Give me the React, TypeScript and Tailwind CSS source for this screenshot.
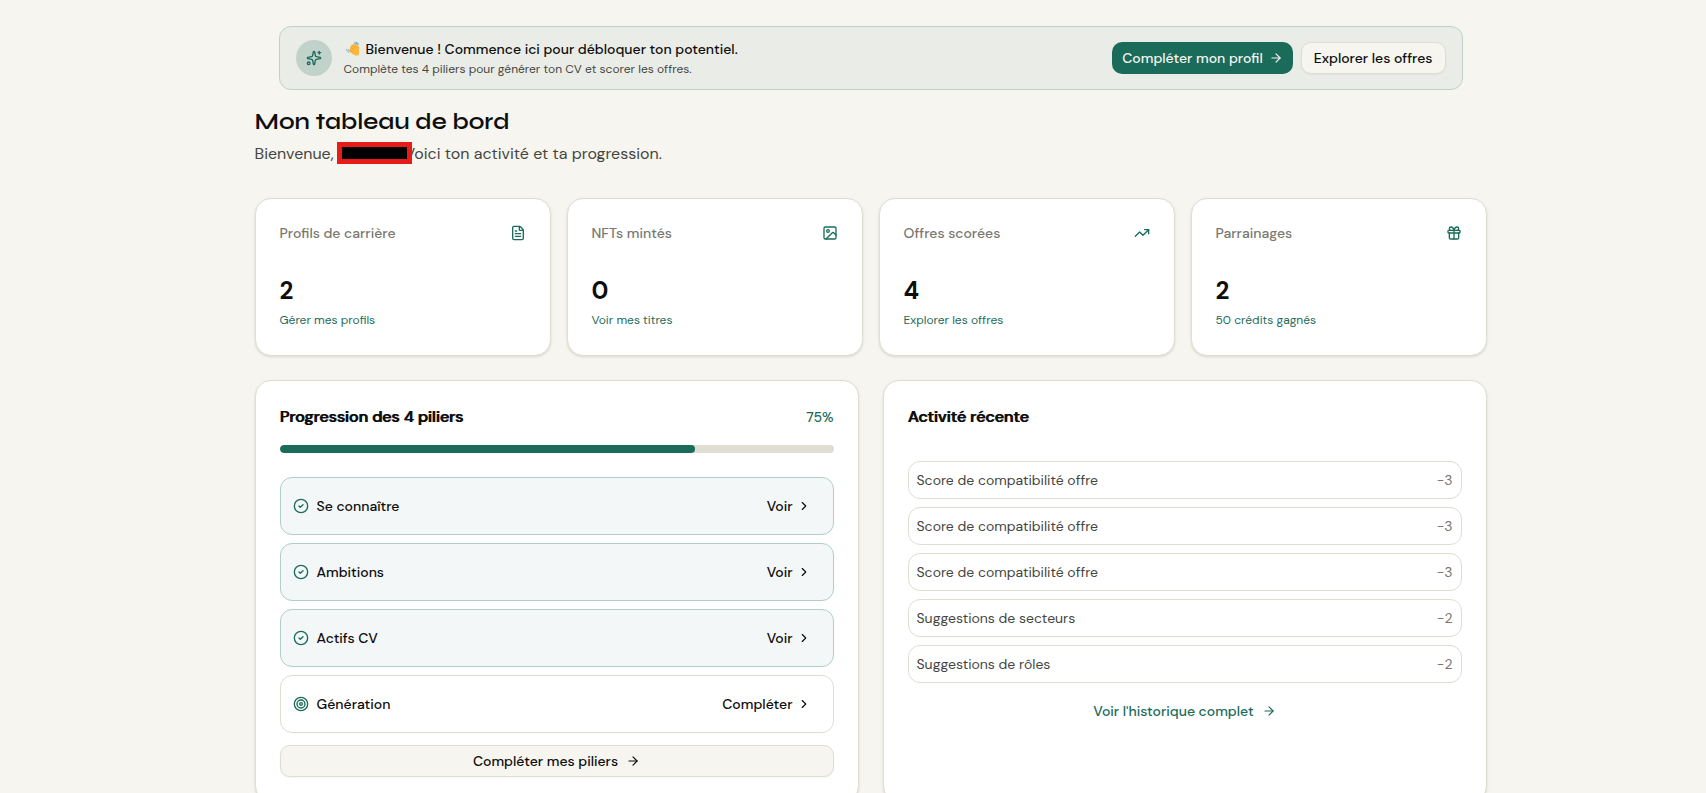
import {
  ArrowRight,
  ChevronRight,
  CircleCheck,
  FileText,
  Gift,
  Image,
  Sparkles,
  Target,
  TrendingUp,
} from "lucide-react";

const stats = [
  { label: "Profils de carrière", value: 2, link: "Gérer mes profils", icon: FileText },
  { label: "NFTs mintés", value: 0, link: "Voir mes titres", icon: Image },
  { label: "Offres scorées", value: 4, link: "Explorer les offres", icon: TrendingUp },
  { label: "Parrainages", value: 2, link: "50 crédits gagnés", icon: Gift },
];

const pillars = [
  { name: "Se connaître", done: true },
  { name: "Ambitions", done: true },
  { name: "Actifs CV", done: true },
  { name: "Génération", done: false },
];

const activities = [
  { id: 1, label: "Score de compatibilité offre", credits: -3 },
  { id: 2, label: "Score de compatibilité offre", credits: -3 },
  { id: 3, label: "Score de compatibilité offre", credits: -3 },
  { id: 4, label: "Suggestions de secteurs", credits: -2 },
  { id: 5, label: "Suggestions de rôles", credits: -2 },
];

const progress = 75;

function WavingHand() {
  return (
    <svg viewBox="0 0 16 16" fill="none" className="size-4" aria-hidden="true">
      <path
        d="M5.4 9.6 6.6 5.2Q7.2 3.6 8.6 3.4L10.6 2.8Q12 2.6 12.8 4L15 5.4V13.4Q13.6 14.8 11.6 14.6 9.4 14.2 8 12.6L5.8 11Q5.2 10.4 5.4 9.6Z"
        fill="#fdb83c"
      />
      <path d="M7.2 6.4 9.6 8.8M9 4.6 11.4 7M5.8 9.2 8.4 11" stroke="#e8963a" strokeWidth="0.8" strokeLinecap="round" />
      <path d="M10.4 1.8Q12.6 1.6 13.8 4M12.2 1.2Q13.8 1.6 14.4 3" stroke="#5b9fd0" strokeLinecap="round" />
      <path d="M2.4 8.6Q3 10.6 5 11.6M4 8.4Q4.2 9.4 5 10" stroke="#8fb2c4" strokeLinecap="round" />
    </svg>
  );
}

function WelcomeBanner() {
  return (
    <section className="mx-6 flex items-center justify-between rounded-xl border border-[#bcd2c8] bg-[#eaede7] px-4 py-3">
      <div className="flex items-center gap-3">
        <div className="flex size-9 items-center justify-center rounded-full bg-[#c1d2cb]">
          <Sparkles className="size-4 text-[#1b6b5a]" />
        </div>
        <div>
          <p className="flex items-center gap-1.5 text-sm font-medium">
            <WavingHand />
            Bienvenue ! Commence ici pour débloquer ton potentiel.
          </p>
          <p className="mt-0.5 text-xs text-[#45453f]">
            Complète tes 4 piliers pour générer ton CV et scorer les offres.
          </p>
        </div>
      </div>
      <div className="flex items-center gap-2">
        <button className="flex h-8 items-center gap-1.5 rounded-[10px] bg-[#1b6b5a] px-2.5 text-sm font-medium text-[#f6f5f0]">
          Compléter mon profil
          <ArrowRight className="size-3.5" />
        </button>
        <button className="h-8 rounded-[10px] border border-[#e0ddd2] bg-[#f6f5f0] px-3 text-sm font-medium shadow-xs">
          Explorer les offres
        </button>
      </div>
    </section>
  );
}

function StatCards() {
  return (
    <div className="mt-8 grid grid-cols-4 gap-4">
      {stats.map(({ label, value, link, icon: Icon }) => (
        <div key={label} className="rounded-2xl border border-[#e0ddd2] bg-white p-6 shadow-sm">
          <div className="flex items-center justify-between">
            <h3 className="text-sm font-medium text-[#7a786f]">{label}</h3>
            <Icon className="size-4 text-[#1b6b5a]" />
          </div>
          <p className="mt-8 text-2xl font-bold">{value}</p>
          <a href="#" className="mt-1 inline-block text-xs text-[#1b6b5a]">
            {link}
          </a>
        </div>
      ))}
    </div>
  );
}

function PillarsCard() {
  return (
    <section className="rounded-2xl border border-[#e0ddd2] bg-white p-6 shadow-sm">
      <div className="flex items-center justify-between">
        <h2 id="pillars" className="text-base font-medium [text-shadow:1px_0_0]">
          Progression des 4 piliers
        </h2>
        <span className="text-sm font-medium text-[#1b6b5a]">{progress}%</span>
      </div>
      <div
        role="progressbar"
        aria-labelledby="pillars"
        aria-valuenow={progress}
        className="mt-4 h-2 overflow-hidden rounded-full bg-[#e0ddd2]"
      >
        <div className="h-full rounded-full bg-[#1b6b5a]" style={{ width: `${progress}%` }}></div>
      </div>
      <ul className="mt-6 space-y-2">
        {pillars.map(({ name, done }) => (
          <li
            key={name}
            className={`flex items-center justify-between rounded-xl border p-3 ${
              done ? "border-[#b0cec7] bg-[#f3f7f8]" : "border-[#e0ddd2]"
            }`}
          >
            <div className="flex items-center gap-2 text-sm font-medium">
              {done ? (
                <CircleCheck className="size-4 text-[#1b6b5a]" />
              ) : (
                <Target className="size-4 text-[#1b6b5a]" />
              )}
              {name}
            </div>
            <button className="flex h-8 items-center gap-1 px-2.5 text-sm font-medium">
              {done ? "Voir" : "Compléter"}
              <ChevronRight className="size-3.5" />
            </button>
          </li>
        ))}
      </ul>
      <button className="mt-3 flex h-8 w-full items-center justify-center gap-2 rounded-[10px] border border-[#e0ddd2] bg-[#f6f5f0] text-sm font-medium shadow-xs">
        Compléter mes piliers
        <ArrowRight className="size-3.5" />
      </button>
    </section>
  );
}

function ActivityCard() {
  return (
    <section className="rounded-2xl border border-[#e0ddd2] bg-white p-6 shadow-sm">
      <h2 className="text-base font-medium [text-shadow:1px_0_0]">Activité récente</h2>
      <ul className="mt-8 space-y-2">
        {activities.map(({ id, label, credits }) => (
          <li
            key={id}
            className="flex items-center justify-between rounded-xl border border-[#e0ddd2] p-2 text-sm"
          >
            <span className="text-[#45453f]">{label}</span>
            <span className="text-[#7a786f]">{credits}</span>
          </li>
        ))}
      </ul>
      <button className="mt-3 flex h-8 w-full items-center justify-center gap-2 text-sm font-medium text-[#1b6b5a]">
        Voir l'historique complet
        <ArrowRight className="size-3.5" />
      </button>
    </section>
  );
}

export default function App() {
  return (
    <div className="min-h-screen bg-[#f6f5f0] pl-[35px] font-['DM_Sans','Inter',sans-serif] text-[#0d0d0d]">
      <main className="mx-auto max-w-7xl px-6 py-[26px]">
        <WelcomeBanner />
        <h1 className="mt-4 font-['Syne','Inter',sans-serif] text-2xl font-semibold">
          Mon tableau de bord
        </h1>
        <p className="mt-1 flex items-center text-base text-[#45453f]">
          Bienvenue,
          <span className="z-10 mb-0.5 ml-[3px] h-[22px] w-[75px] border-5 border-[#e81b1b] bg-black"></span>
          <span className="-ml-[7px]">Voici ton activité et ta progression.</span>
        </p>
        <StatCards />
        <div className="mt-6 grid grid-cols-2 gap-6">
          <PillarsCard />
          <ActivityCard />
        </div>
      </main>
    </div>
  );
}
